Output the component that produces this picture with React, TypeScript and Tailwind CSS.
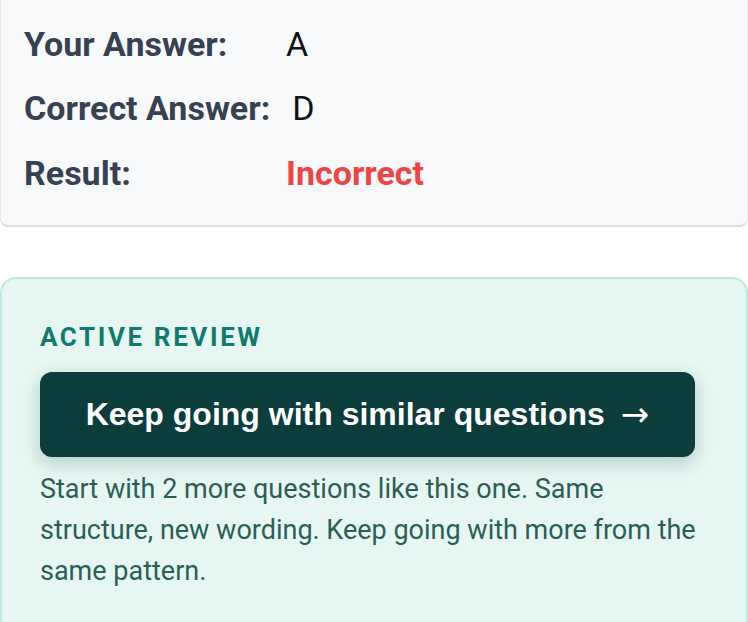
export default function App() {
  const rows = [
    { label: 'Your Answer:', value: 'A', tone: 'text-[#111111] font-normal' },
    { label: 'Correct Answer:', value: 'D', tone: 'text-[#111111] font-normal' },
    { label: 'Result:', value: 'Incorrect', tone: 'text-[#ef4444] font-bold' },
  ];

  return (
    <main className="min-h-screen bg-white font-['Roboto',sans-serif] overflow-hidden">
      {/* answer summary */}
      <section className="-mt-[20px] rounded-lg border border-[#e6e7ea] border-b-2 border-b-[#dcdde0] bg-[#f8f9fb] pl-[23px] pt-[31px] pb-[19px]">
        {rows.map((r) => (
          <div key={r.label} className="flex h-[64.5px] items-center gap-[22px]">
            <span className="min-w-[240px] whitespace-nowrap text-[34px] font-bold text-[#374151]">
              {r.label}
            </span>
            <span className={`text-[34px] ${r.tone}`}>{r.value}</span>
          </div>
        ))}
      </section>

      {/* active review */}
      <section className="mt-[50px] rounded-t-2xl border-2 border-[#bde6dd] bg-[#e6f6f2] px-[38px] pt-[40px] pb-[40px]">
        <div className="text-[26px] font-bold uppercase leading-[36px] tracking-[0.1em] text-[#117a6d]">
          Active Review
        </div>
        <button
          type="button"
          className="mt-[17px] flex h-[85px] w-[655px] items-center justify-center rounded-xl bg-[#0a3d3b] font-['Liberation_Sans',Arial,sans-serif] text-[32px] font-bold text-white shadow-[0_6px_18px_rgba(10,61,59,0.22)]"
        >
          Keep going with similar questions
          <span className="ml-[16px] font-['DejaVu_Sans',sans-serif] text-[34px] font-normal leading-none">→</span>
        </button>
        <p className="mt-[12px] w-[668px] text-[27px] leading-[41px] text-[#2c5e56]">
          Start with 2 more questions like this one. Same structure, new wording. Keep going with more from the same pattern.
        </p>
      </section>
    </main>
  );
}
